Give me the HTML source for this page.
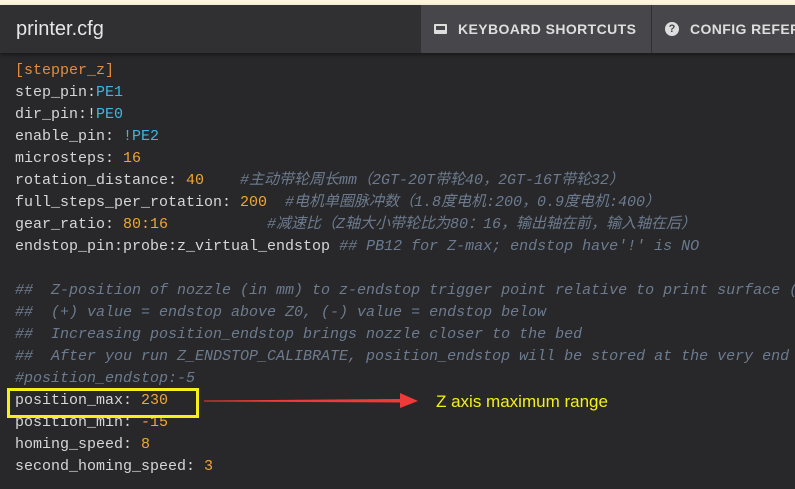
<!DOCTYPE html>
<html><head><meta charset="utf-8"><style>
body{margin:0;width:795px;height:489px;overflow:hidden;background:#28282a;position:relative;font-family:"Liberation Mono","Noto Sans CJK SC",monospace}
.top{position:absolute;left:0;top:0;width:795px;height:5px;background:#fdf6dc}
.hdr{position:absolute;left:0;top:5px;width:795px;height:48px;background:#303032;box-shadow:0 2px 4px rgba(0,0,0,.4);overflow:hidden}
.title{position:absolute;left:16px;top:13px;font:20px "Liberation Sans",sans-serif;color:#e6e6e6}
.btn{position:absolute;top:0;height:48px;background:#47464b;color:#dedede;font:bold 14px "Liberation Sans",sans-serif;letter-spacing:.4px;line-height:48px;overflow:hidden}
.l{position:absolute;left:15px;font-size:15px;line-height:22px;color:#d6d6d6;white-space:pre}
.o{color:#f0a534}.s{color:#e38c3f}.c{color:#3cb8e0}
.cm{color:#6c7b8f;font-style:italic}
</style></head><body>
<div class="top"></div>
<div class="hdr"><div class="title">printer.cfg</div>
<div class="btn" style="left:421px;width:230px"><span style="position:absolute;left:13px;top:19px;width:13px;height:10px;background:#dedede;border-radius:1px"></span><span style="position:absolute;left:15px;top:21px;width:9px;height:4px;background:#47464b"></span><span style="position:absolute;left:37px">KEYBOARD SHORTCUTS</span></div>
<div class="btn" style="left:652px;width:143px"><span style="position:absolute;left:13px;top:17px;width:14px;height:14px;border-radius:50%;background:#dedede;color:#47464b;font-size:11px;line-height:14px;text-align:center;letter-spacing:0">?</span><span style="position:absolute;left:38px;white-space:nowrap">CONFIG REFERENCE</span></div>
</div>
<div class="l" style="top:60px"><span class="s">[stepper_z]</span></div>
<div class="l" style="top:82px">step_pin:<span class="c">PE1</span></div>
<div class="l" style="top:104px">dir_pin:!<span class="c">PE0</span></div>
<div class="l" style="top:126px">enable_pin: <span class="c">!PE2</span></div>
<div class="l" style="top:148px">microsteps: <span class="o">16</span></div>
<div class="l" style="top:170px">rotation_distance: <span class="o">40</span></div>
<div class="l cm" style="top:170px;left:240px">#主动带轮周长mm（2GT-20T带轮40，2GT-16T带轮32）</div>
<div class="l" style="top:192px">full_steps_per_rotation: <span class="o">200</span></div>
<div class="l cm" style="top:192px;left:285px">#电机单圈脉冲数（1.8度电机:200，0.9度电机:400）</div>
<div class="l" style="top:214px">gear_ratio: <span class="o">80:16</span></div>
<div class="l cm" style="top:214px;left:267px">#减速比（Z轴大小带轮比为80：16，输出轴在前，输入轴在后）</div>
<div class="l" style="top:236px">endstop_pin:probe:z_virtual_endstop <span class="cm">## PB12 for Z-max; endstop have'!' is NO</span></div>
<div class="l cm" style="top:280px">##  Z-position of nozzle (in mm) to z-endstop trigger point relative to print surface (</div>
<div class="l cm" style="top:302px">##  (+) value = endstop above Z0, (-) value = endstop below</div>
<div class="l cm" style="top:324px">##  Increasing position_endstop brings nozzle closer to the bed</div>
<div class="l cm" style="top:346px">##  After you run Z_ENDSTOP_CALIBRATE, position_endstop will be stored at the very end</div>
<div class="l cm" style="top:368px">#position_endstop:-5</div>
<div class="l" style="top:390px">position_max: <span class="o">230</span></div>
<div class="l" style="top:412px">position_min: <span class="o">-15</span></div>
<div class="l" style="top:434px">homing_speed: <span class="o">8</span></div>
<div class="l" style="top:456px">second_homing_speed: <span class="o">3</span></div>
<div style="position:absolute;left:7px;top:388px;width:186px;height:24px;border:3px solid #f5ef1a"></div>
<svg style="position:absolute;left:200px;top:390px" width="220" height="22"><polygon points="4,10.5 200,9 200,3 218,11 200,18 200,12.5 4,11.5" fill="#f03a3a"/></svg>
<div style="position:absolute;left:436px;top:392px;font:17px 'Liberation Sans',sans-serif;color:#f5ef1a">Z axis maximum range</div>
</body></html>
